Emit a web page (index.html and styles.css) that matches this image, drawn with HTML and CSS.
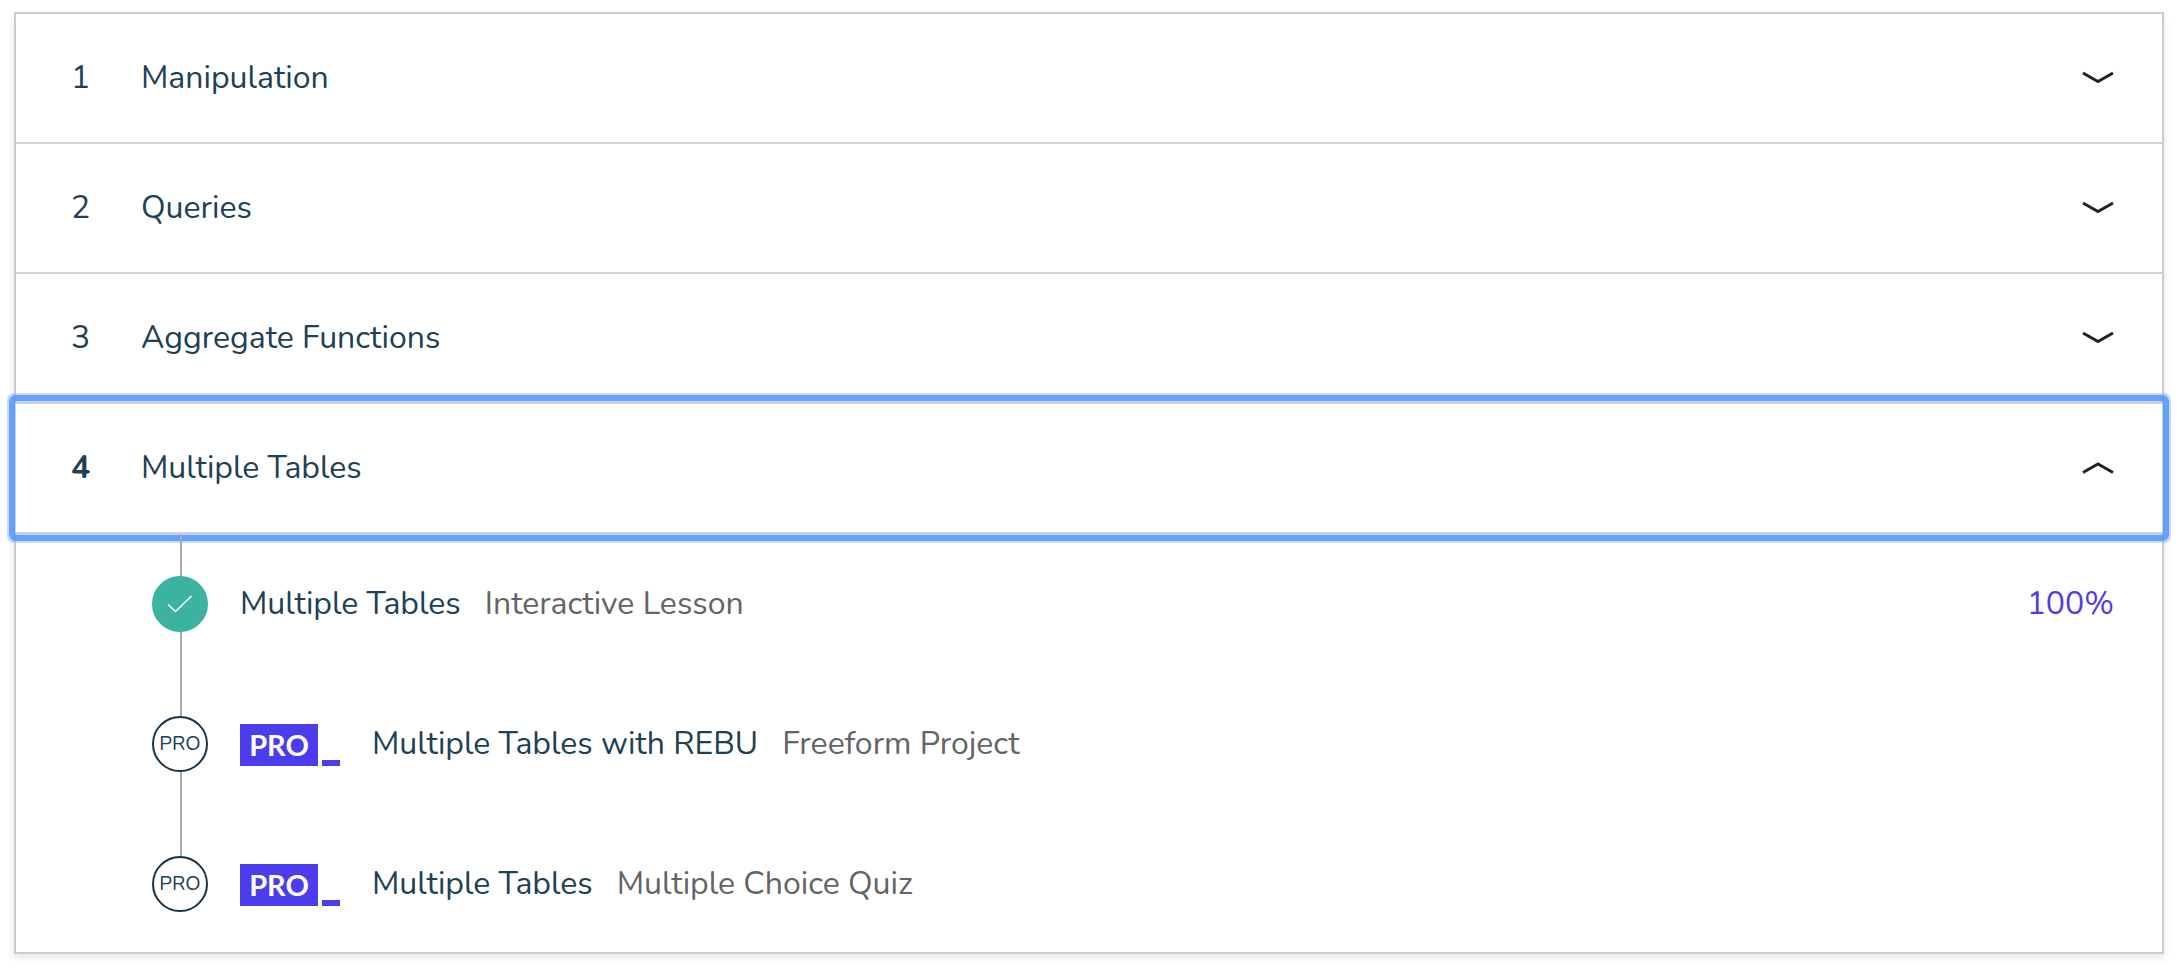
FILE: index.html
```html
<!DOCTYPE html>
<html lang="en">
<head>
<meta charset="utf-8">
<title>Syllabus</title>
<link rel="stylesheet" href="styles.css">
</head>
<body>
<main class="syllabus">
  <button class="module" type="button" aria-expanded="false">
    <span class="number">1</span><span class="name">Manipulation</span>
    <svg class="chevron" viewBox="0 0 32 14" aria-hidden="true"><path d="M1 2 16 10.500 31 2"/></svg>
  </button>
  <button class="module" type="button" aria-expanded="false">
    <span class="number">2</span><span class="name">Queries</span>
    <svg class="chevron" viewBox="0 0 32 14" aria-hidden="true"><path d="M1 2 16 10.500 31 2"/></svg>
  </button>
  <button class="module" type="button" aria-expanded="false">
    <span class="number">3</span><span class="name">Aggregate Functions</span>
    <svg class="chevron" viewBox="0 0 32 14" aria-hidden="true"><path d="M1 2 16 10.500 31 2"/></svg>
  </button>
  <button class="module module-open" type="button" aria-expanded="true" aria-controls="lessons">
    <span class="number">4</span><span class="name">Multiple Tables</span>
    <svg class="chevron" viewBox="0 0 32 14" aria-hidden="true"><path d="M1 11.500 16 3 31 11.500"/></svg>
  </button>
  <ul class="lessons" id="lessons">
    <li class="lesson">
      <span class="marker marker-done"><svg class="check" viewBox="0 0 26 18" aria-label="Completed"><path d="M1 9.500 8.500 16.500 24.500 1"/></svg></span>
      <a class="title" href="#">Multiple Tables</a>
      <span class="kind">Interactive Lesson</span>
      <span class="progress">100%</span>
    </li>
    <li class="lesson">
      <span class="marker">PRO</span>
      <span class="badge"><span class="badge-text">PRO</span></span>
      <a class="title" href="#">Multiple Tables with REBU</a>
      <span class="kind">Freeform Project</span>
    </li>
    <li class="lesson">
      <span class="marker">PRO</span>
      <span class="badge"><span class="badge-text">PRO</span></span>
      <a class="title" href="#">Multiple Tables</a>
      <span class="kind">Multiple Choice Quiz</span>
    </li>
  </ul>
</main>
</body>
</html>
```
FILE: styles.css
```css
* {
  box-sizing: border-box;
}

body {
  margin: 0;
  padding: 12px 18px 14px 14px;
  background: #fff;
  color: #204056;
  font: 32px/44px Nunito, "Noto Sans", sans-serif;
}

.syllabus {
  border: 2px solid #ccc;
  box-shadow: 0 4px 8px rgba(0, 0, 0, 0.1);
}

.module {
  display: flex;
  align-items: center;
  width: 100%;
  height: 130px;
  padding: 0 48px 0 55px;
  border: 0;
  border-bottom: 2px solid #d4d4d4;
  background: #fff;
  color: inherit;
  font: inherit;
  text-align: left;
}

.number {
  width: 70px;
}

.chevron {
  width: 32px;
  height: 14px;
  margin-left: auto;
  fill: none;
  stroke: #222;
  stroke-width: 3;
}

.module-open {
  position: relative;
  height: 132px;
  margin-top: -2px;
  border-top: 2px solid #c9cfdb;
  border-bottom-color: #c9cfdb;
  border-radius: 2px;
  box-shadow: 0 0 0 1px #bfd7fc, 0 0 0 7px rgba(85, 150, 245, 0.84), 0 0 0 9px rgba(125, 175, 250, 0.45);
}

.module-open .number {
  font-weight: 700;
}

.lessons {
  position: relative;
  margin: 0;
  padding: 0 48px 0 136px;
  list-style: none;
}

.lesson {
  display: flex;
  align-items: center;
  height: 140px;
  background: linear-gradient(#a9a9ad, #a9a9ad) 28px 0 / 2px 100% no-repeat;
}

.lesson:last-child {
  height: 138px;
  padding-top: 2px;
  background-size: 2px 50%;
}

.marker {
  display: flex;
  align-items: center;
  justify-content: center;
  width: 56px;
  height: 56px;
  margin-right: 32px;
  border: 2px solid #183347;
  border-radius: 50%;
  background: #fff;
  font-size: 20px;
}

.marker-done {
  border-color: #3cb2a1;
  background: #3cb2a1;
}

.check {
  width: 26px;
  height: 18px;
  fill: none;
  stroke: #fff;
  stroke-width: 1.5;
}

.badge {
  display: flex;
  align-items: flex-end;
  gap: 4px;
  margin-right: 32px;
  padding-top: 2px;
}

.badge-text {
  width: 78px;
  background: #4b3deb;
  color: #fff;
  font: 700 29px/42px Lato, sans-serif;
  text-align: center;
}

.badge::after {
  content: "";
  width: 18px;
  height: 6px;
  background: #4b3deb;
}

.title {
  color: inherit;
  text-decoration: none;
}

.kind {
  margin-left: 24px;
  color: #646466;
}

.progress {
  margin-left: auto;
  color: #4b3deb;
}
```
